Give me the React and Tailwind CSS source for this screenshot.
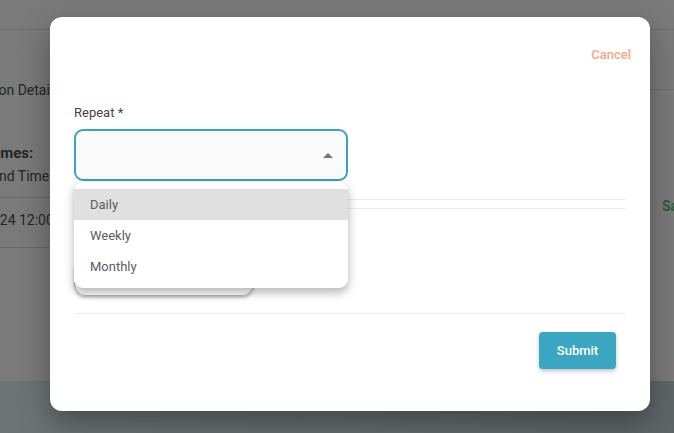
import React, { useState } from "react";

const options = ["Daily", "Weekly", "Monthly"];

const Backdrop = () => (
  <div className="flex h-[433px] w-[674px] flex-col bg-[#7a7a7a] text-[#262626]">
    <div className="h-[30px] border-b border-[#6d6d6d]" />
    <div className="flex h-[326px] border-b border-[#6a8286]">
      <div className="w-[50px] overflow-hidden">
        <div className="ml-[-40px] mt-[50px] whitespace-nowrap text-[14px] leading-5">
          Location Details
        </div>
        <div className="ml-[-13px] mt-[43px] whitespace-nowrap text-[15px] font-bold leading-5">
          Times:
        </div>
        <div className="ml-[-9px] mt-[3px] whitespace-nowrap text-[14px] leading-5">
          End Time
        </div>
        <div className="mt-[11px] border-b border-[#676767]" />
        <div className="ml-[-59px] mt-[12px] whitespace-nowrap text-[14px] leading-5">
          10/04/2024 12:00
        </div>
        <div className="mt-[17px] border-b border-[#676767]" />
      </div>
      <div className="flex-1" />
      <div className="w-[24px] overflow-hidden">
        <div className="h-[60px] border-b border-[#6d6d6d]" />
        <div className="ml-[12px] mt-[106px] text-[14px] font-bold leading-5 text-[#2b5e3b]">
          Save
        </div>
      </div>
    </div>
    <div className="h-[25px]" />
    <div className="flex-1 bg-gradient-to-r from-[#6c7476] to-[#5f6668]" />
  </div>
);

const RepeatSelect = () => {
  const [value, setValue] = useState("");
  const [open, setOpen] = useState(true);
  const [hover, setHover] = useState(0);

  return (
    <div className="relative">
      <button
        onClick={() => setOpen(!open)}
        className="flex h-[52px] w-[274px] items-center justify-between rounded-[9px] border-2 border-[#3aa3bf] bg-[#fafafa] pl-4 pr-[13px] text-left text-[13px] text-[#444]"
      >
        <span>{value}</span>
        <span className="h-0 w-0 border-x-[5px] border-b-[5px] border-x-transparent border-b-[#757575]" />
      </button>
      {open && (
        <div className="absolute left-0 top-[53px] z-10 w-[274px] rounded-[9px] bg-white pb-[6px] pt-[7px] shadow-[0_5px_8px_rgba(0,0,0,0.22),0_2px_14px_rgba(0,0,0,0.1)]">
          {options.map((opt, i) => (
            <div
              key={opt}
              onMouseEnter={() => setHover(i)}
              onClick={() => {
                setValue(opt);
                setOpen(false);
              }}
              className={`h-[31px] cursor-pointer px-4 text-[13px] leading-[31px] text-[#5c5c5c] ${
                hover === i ? "bg-[#e0e0e0]" : "bg-white"
              }`}
            >
              {opt}
            </div>
          ))}
        </div>
      )}
    </div>
  );
};

export default function App() {
  return (
    <div
      className="relative h-[433px] w-[674px] overflow-hidden"
      style={{ fontFamily: "Roboto, 'Liberation Sans', sans-serif" }}
    >
      <Backdrop />
      <div className="absolute left-[50px] top-[17px] flex h-[394px] w-[600px] flex-col rounded-[12px] bg-white px-6 pt-[28px] shadow-[0_12px_30px_rgba(0,0,0,0.35)]">
        <div className="-mr-[5px] flex justify-end">
          <button className="text-[13px] font-medium leading-5 text-[#f4a783]">
            Cancel
          </button>
        </div>
        <div className="mt-[38px] text-[13px] leading-5 text-[#444]">Repeat *</div>
        <div className="mt-[6px]">
          <RepeatSelect />
        </div>
        <div className="mt-[18px] border-b border-[#ececec]" />
        <div className="mt-[8px] flex h-[106px] flex-col border-t border-b border-[#ececec]">
          <div className="mt-[16px] text-[13px] leading-5 text-[#444]">Ends</div>
          <div className="mt-[14px] flex h-[37px] w-[180px] items-center rounded-[12px] border border-[#b5b5b5] px-3 text-[13px] text-[#555] shadow-[0_2px_3px_rgba(0,0,0,0.25)]">
            Never
          </div>
        </div>
        <div className="mt-[18px] flex justify-end pr-[10px]">
          <button className="h-[37px] w-[77px] rounded-[4px] bg-[#3ba6c1] text-[13px] font-medium text-white shadow-[0_2px_4px_rgba(0,0,0,0.25)]">
            Submit
          </button>
        </div>
      </div>
    </div>
  );
}
